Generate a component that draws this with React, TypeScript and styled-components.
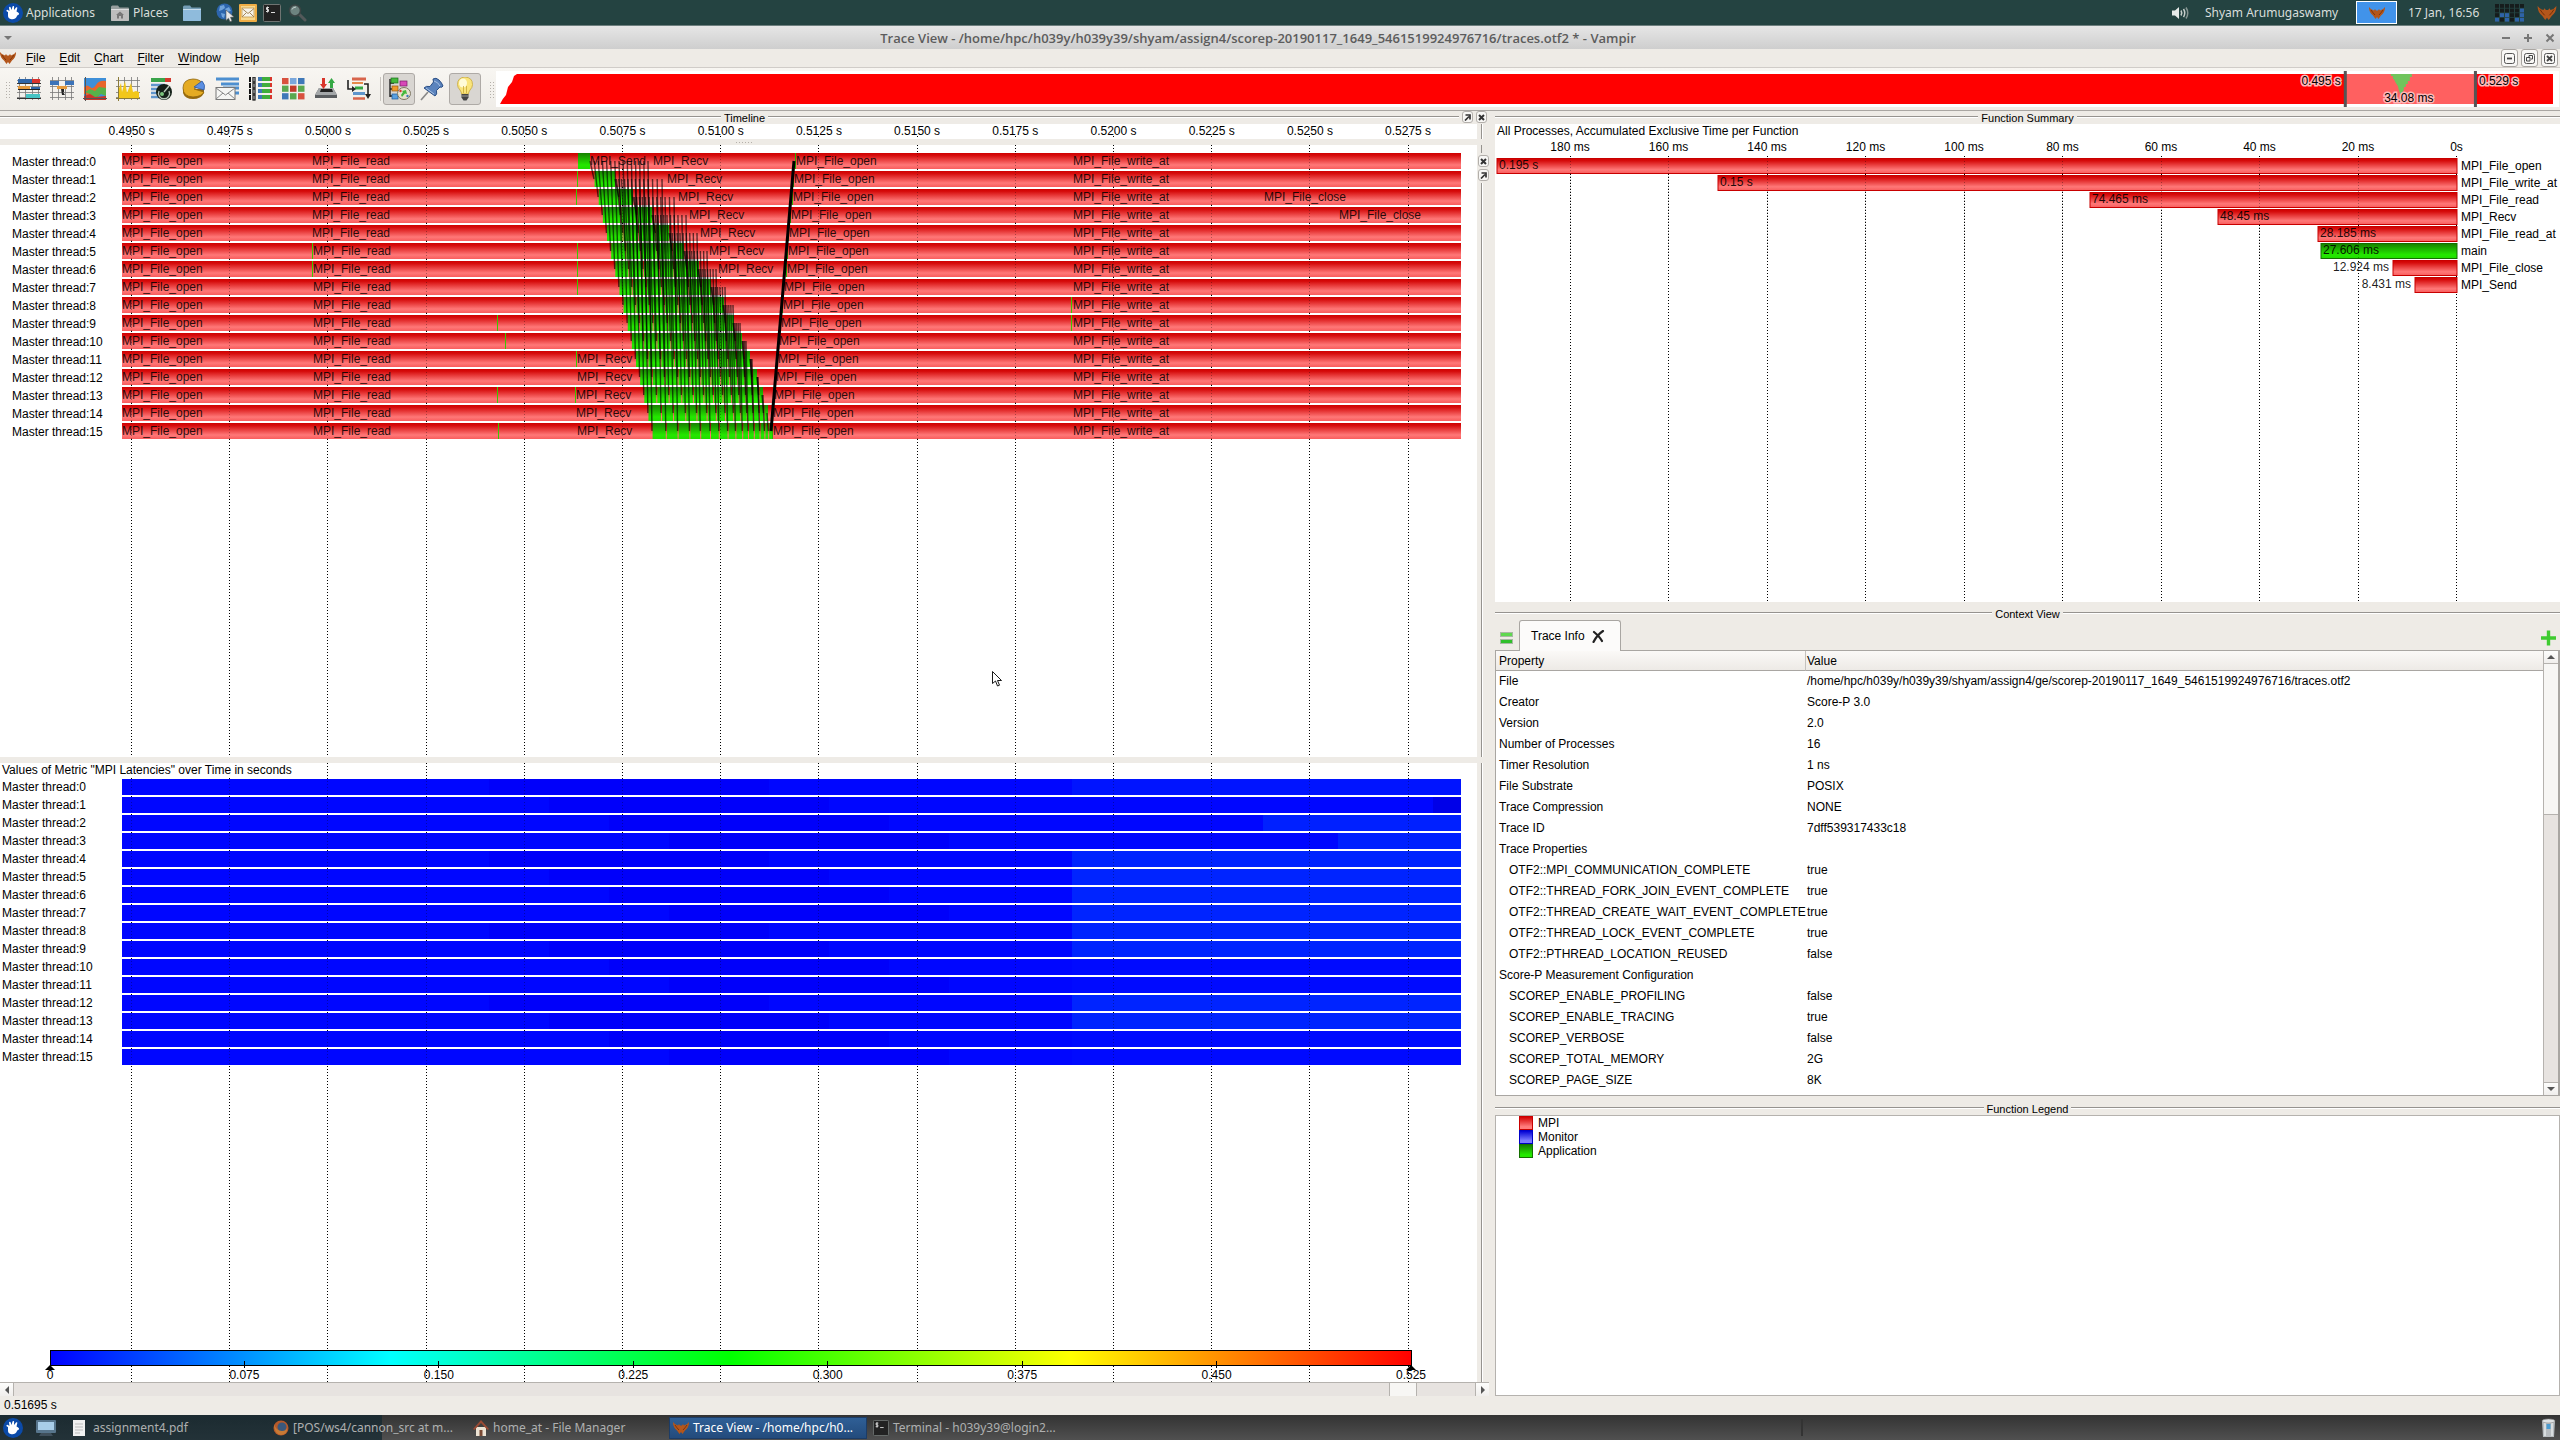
import React from "react";
import styled, { createGlobalStyle, css } from "styled-components";

const Global = createGlobalStyle`
  * { box-sizing: border-box; }
  body { margin: 0; background: #eeebe6; overflow: hidden; }
  body, button { font-family: "Liberation Sans", Arial, sans-serif; font-size: 12px; color: #000; }
  button { border: 0; padding: 0; background: none; cursor: default; }
  svg { display: block; }
`;

const desktopFont = css`
  font-family: "Noto Sans", "Open Sans", sans-serif;
`;

/* ---------- shell ---------- */

const Page = styled.div`
  height: 100vh;
  display: flex;
  flex-direction: column;
  background: #eeebe6;
`;

const TopPanel = styled.header`
  height: 26px;
  flex: none;
  display: flex;
  align-items: center;
  padding: 0 2px 0 3px;
  background: #244341;
  border-bottom: 1px solid #6d7f7e;
`;

const PanelButton = styled.button<{ $w: number }>`
  ${desktopFont}
  width: ${(p) => p.$w}px;
  height: 24px;
  flex: none;
  display: flex;
  align-items: center;
  gap: 3px;
  color: #d9dedb;
  white-space: nowrap;
`;

const Spacer = styled.div`
  flex: 1;
`;

const WorkspaceButton = styled.button`
  width: 41px;
  height: 23px;
  margin-right: 11px;
  display: grid;
  place-items: center;
  background: #4193ea;
  border: 1px solid #fff;
`;

const TitleBar = styled.div`
  height: 23px;
  flex: none;
  display: grid;
  grid-template-columns: 36px 1fr 80px;
  align-items: center;
  background: linear-gradient(#e6e6e6, #cecece);
`;

const WindowTitle = styled.h1`
  margin: 0;
  font-family: "Open Sans", "Noto Sans", sans-serif;
  font-size: 13px;
  line-height: 22px;
  font-weight: 600;
  color: #5c5c5c;
  text-align: center;
  white-space: nowrap;
`;

const TitleControls = styled.div<{ $end?: boolean }>`
  display: flex;
  gap: 10px;
  padding: 0 4px;
  justify-content: ${(p) => (p.$end ? "flex-end" : "flex-start")};
`;

const MenuBar = styled.nav`
  height: 19px;
  flex: none;
  display: flex;
  align-items: center;
  gap: 10px;
  padding: 0 2px 0 0;
  border-bottom: 1px solid #d0ccc8;
`;

const MenuItems = styled.div`
  display: flex;
  gap: 14px;
`;

const MenuItem = styled.button`
  line-height: 18px;
  & > u {
    text-underline-offset: 2px;
  }
`;

const MdiGroup = styled.div`
  display: flex;
  gap: 3px;
  margin-left: auto;
`;

const MdiButton = styled.button`
  width: 17px;
  height: 18px;
  display: grid;
  place-items: center;
  border: 1px solid #aaa6a2;
  border-radius: 3px;
  background: #f8f7f5;
`;

const Toolbar = styled.div`
  height: 43px;
  flex: none;
  display: flex;
  align-items: center;
  gap: 1px;
  padding: 0 1px 0 5px;
  background: linear-gradient(#f8f6f2, #efece7);
  border-bottom: 1px solid #a9a6a2;
`;

const Handle = styled.div<{ $before: number; $after: number }>`
  width: 5px;
  height: 17px;
  margin: 0 ${(p) => p.$after}px 0 ${(p) => p.$before}px;
  background-image: radial-gradient(#b4b0aa 1px, transparent 1px);
  background-size: 3px 3px;
`;

const ToolButton = styled.button<{ $on?: boolean }>`
  width: 32px;
  height: 32px;
  flex: none;
  display: grid;
  place-items: center;
  border-radius: 3px;
  ${(p) =>
    p.$on &&
    css`
      background: #d9d6d2;
      border: 1px solid #aeaaa6;
    `}
`;

const ToolSeparator = styled.div`
  width: 1px;
  height: 24px;
  margin: 0 1px 0 4px;
  background: #c9c5c0;
`;

const Overview = styled.div`
  flex: 1;
  height: 36px;
  background: #fff;
`;

const Workspace = styled.main`
  flex: 1;
  min-height: 0;
  display: grid;
  grid-template-columns: minmax(0, 1489fr) minmax(0, 1065fr);
  column-gap: 6px;
`;

const Column = styled.section`
  min-width: 0;
  min-height: 0;
  display: flex;
  flex-direction: column;
`;

const StatusBar = styled.footer`
  height: 19px;
  flex: none;
  padding-left: 4px;
  line-height: 19px;
`;

/* ---------- dock heading ---------- */

const HeadingRow = styled.div<{ $top?: number }>`
  flex: none;
  display: grid;
  grid-template-columns: 1fr auto 1fr;
  column-gap: 3px;
  padding-top: ${(p) => p.$top ?? 0}px;
`;

const HeadingText = styled.h2`
  margin: 0;
  padding-top: 2px;
  font-size: 11px;
  font-weight: 400;
  line-height: 11px;
`;

const HeadingSide = styled.div`
  display: flex;
  height: 13px;
  gap: 3px;
`;

const HeadingButtons = styled.div`
  display: flex;
  gap: 3px;
  padding-right: 2px;
`;

const Rule = styled.div`
  flex: 1;
  height: 2px;
  margin-top: 5px;
  background: #fff;
  border-top: 1px solid #96938f;
`;

const MiniButton = styled.button`
  width: 11px;
  height: 12px;
  display: grid;
  place-items: center;
  border: 1px solid #b3afab;
  border-radius: 3px;
  background: #f8f7f5;
`;

function Heading({ title, top, children }: { title: string; top?: number; children?: React.ReactNode }) {
  return (
    <HeadingRow $top={top}>
      <HeadingSide>
        <Rule />
      </HeadingSide>
      <HeadingText>{title}</HeadingText>
      <HeadingSide>
        <Rule />
        {children}
      </HeadingSide>
    </HeadingRow>
  );
}

/* ---------- timeline panes ---------- */

const Pane = styled.div<{ $grow?: number; $height?: number }>`
  flex: ${(p) => (p.$grow ? `${p.$grow} 1 0` : "none")};
  height: ${(p) => (p.$height ? `${p.$height}px` : "auto")};
  min-height: 0;
  display: grid;
  grid-template-columns: minmax(0, 1fr) 12px;
`;

const Canvas = styled.div`
  min-height: 0;
  display: grid;
  grid-template-columns: 122px minmax(0, 1fr) 16px;
  grid-template-rows: minmax(0, 1fr);
  background: #fff;
`;

const PlotLayer = styled.svg`
  grid-column: 2;
  grid-row: 1;
  width: 100%;
  height: 100%;
  overflow: visible;
`;

const LabelList = styled.ul<{ $left: number; $top: number }>`
  grid-column: 1;
  grid-row: 1;
  margin: 0;
  padding: ${(p) => p.$top}px 0 0 ${(p) => p.$left}px;
  list-style: none;
  line-height: 18px;
  white-space: nowrap;
`;

const SideStrip = styled.div`
  display: flex;
  flex-direction: column;
  gap: 2px;
`;

const SideLine = styled.div`
  flex: 1;
  width: 2px;
  margin-left: 4px;
  background: #fff;
  border-left: 1px solid #96938f;
`;

const SideButtons = styled.div`
  display: flex;
  flex-direction: column;
  gap: 2px;
  padding-left: 1px;
`;

const SideStub = styled.div`
  height: 8px;
  width: 2px;
  margin-left: 4px;
  border-left: 1px solid #96938f;
`;

const Splitter = styled.div`
  flex: none;
  height: 6px;
  display: grid;
  place-items: center;
`;

const SplitterDots = styled.div`
  width: 17px;
  height: 1px;
  background: repeating-linear-gradient(90deg, #b4b0aa 0 1px, transparent 1px 3px);
`;

const MetricContent = styled.div`
  grid-column: 1 / -1;
  grid-row: 1;
  z-index: 1;
  display: flex;
  flex-direction: column;
`;

const MetricTitle = styled.h3`
  margin: 0;
  align-self: flex-start;
  height: 15px;
  padding: 0 2px;
  font-size: 12px;
  font-weight: 400;
  line-height: 15px;
  background: #fff;
`;

const MetricRows = styled.div`
  flex: 1;
  display: grid;
  grid-template-columns: 122px minmax(0, 1fr) 16px;
`;

const ScaleBlock = styled.div`
  padding: 0 66px 0 50px;
  height: 33px;
`;

const ScaleSvg = styled.svg`
  width: 100%;
  height: 33px;
  overflow: visible;
`;

const HScroll = styled.div`
  flex: none;
  height: 14px;
  display: flex;
  border-top: 1px solid #b5b2ae;
  background: #e7e3e0;
`;

const ScrollButton = styled.button<{ $line: string }>`
  width: 14px;
  height: 13px;
  flex: none;
  display: grid;
  place-items: center;
  background: linear-gradient(#fdfdfc, #f0eeec);
  border-${(p) => p.$line}: 1px solid #b5b2ae;
`;

const Trough = styled.div<{ $grow: number }>`
  flex: ${(p) => p.$grow} 1 0;
`;

const Thumb = styled.div<{ $vertical?: boolean; $grow: number }>`
  flex: ${(p) => p.$grow} 1 0;
  background: #f7f6f4;
  border: 0 solid #b5b2ae;
  border-width: ${(p) => (p.$vertical ? "0 0 1px" : "0 1px")};
`;

/* ---------- right column ---------- */

const SummaryPane = styled.div`
  flex: 478 1 0;
  min-height: 0;
  display: grid;
  grid-template-columns: 2px minmax(0, 1fr) 103px;
  grid-template-rows: 34px minmax(0, 1fr);
  background: #fff;
  overflow: hidden;
`;

const SummaryTitle = styled.h3`
  grid-column: 2 / -1;
  margin: 0;
  font-size: 12px;
  font-weight: 400;
  line-height: 14px;
`;

const SummaryPlot = styled.svg`
  grid-column: 2;
  grid-row: 2;
  width: 100%;
  height: 100%;
  overflow: visible;
`;

const SummaryNames = styled.ul`
  grid-column: 3;
  grid-row: 2;
  margin: 0;
  padding: 0 0 0 4px;
  list-style: none;
  line-height: 17px;
  white-space: nowrap;
`;

const TabBar = styled.div`
  flex: none;
  height: 30px;
  display: flex;
  align-items: flex-end;
  padding: 0 4px 0 5px;
`;

const TabAction = styled.button<{ $end?: boolean }>`
  width: 15px;
  height: 24px;
  margin-left: ${(p) => (p.$end ? "auto" : "0")};
`;

const Tab = styled.div`
  height: 31px;
  width: 102px;
  margin: 0 0 -1px 4px;
  padding: 0 15px 0 11px;
  display: flex;
  align-items: center;
  justify-content: space-between;
  z-index: 1;
  background: #fcfbfa;
  border: 1px solid #a9a6a2;
  border-bottom: 0;
  border-radius: 3px 3px 0 0;
`;

const TreeBox = styled.div`
  flex: 444 1 0;
  min-height: 0;
  display: grid;
  grid-template-columns: minmax(0, 1fr) 15px;
  border: 1px solid #a9a6a2;
  border-right-width: 2px;
  background: #fff;
  overflow: hidden;
`;

const TreeView = styled.div`
  min-height: 0;
  overflow: hidden;
`;

const Table = styled.table`
  width: 100%;
  border-spacing: 0;
  table-layout: fixed;
`;

const HeadCell = styled.th<{ $w?: number }>`
  width: ${(p) => (p.$w ? `${p.$w}px` : "auto")};
  height: 20px;
  padding: 1px 0 0 ${(p) => (p.$w ? 3 : 1)}px;
  text-align: left;
  font-weight: 400;
  line-height: 17px;
  background: linear-gradient(#fbf9f7, #edeae6);
  border-bottom: 1px solid #a9a6a2;
  border-left: ${(p) => (p.$w ? "0" : "1px solid #c4c1bd")};
`;

const Cell = styled.td<{ $pad: number }>`
  height: 21px;
  padding: 0 0 0 ${(p) => p.$pad}px;
  line-height: 21px;
  white-space: nowrap;
`;

const VScroll = styled.div`
  display: flex;
  flex-direction: column;
  background: #e7e3e0;
  border-left: 1px solid #b5b2ae;
`;

const LegendBox = styled.ul`
  flex: 279 1 0;
  min-height: 0;
  margin: 0;
  padding: 0 0 0 23px;
  list-style: none;
  background: #fff;
  border: 1px solid #b5b2ae;
`;

const LegendItem = styled.li`
  height: 14px;
  display: flex;
  align-items: center;
  gap: 5px;
  line-height: 14px;
`;

const Swatch = styled.span<{ $top: string; $bottom: string; $edge: string }>`
  width: 14px;
  height: 14px;
  border: 1px solid ${(p) => p.$edge};
  background: linear-gradient(${(p) => p.$top}, ${(p) => p.$bottom} 80%);
`;

/* ---------- task bar ---------- */

const TaskBar = styled.footer`
  height: 25px;
  flex: none;
  display: flex;
  align-items: center;
  padding: 0 4px 0 3px;
  background: linear-gradient(90deg, rgba(20, 40, 48, 0.75) 0 382px, transparent 382px),
    linear-gradient(#333, #505050);
`;

const Tasks = styled.div`
  flex: 1;
  display: flex;
  gap: 2px;
`;

const TaskButton = styled.button<{ $active?: boolean }>`
  ${desktopFont}
  width: 198px;
  height: 22px;
  padding: 0 4px 0 3px;
  display: flex;
  align-items: center;
  gap: 4px;
  text-align: left;
  white-space: nowrap;
  color: ${(p) => (p.$active ? "#fff" : "#aeb0b0")};
  background: ${(p) => (p.$active ? "linear-gradient(#2f5f96, #234b7c)" : "none")};
  border: 1px solid ${(p) => (p.$active ? "#1c3c66" : "transparent")};
`;

const DesktopButton = styled.button`
  width: 33px;
  height: 24px;
  flex: none;
  display: grid;
  place-items: center start;
`;

const TaskSeparator = styled.div`
  width: 2px;
  height: 17px;
  margin-right: 738px;
  background: #333;
`;

const Pointer = styled.svg`
  position: absolute;
  left: 992px;
  top: 671px;
  z-index: 5;
`;

/* ---------- icons ---------- */

const XubuntuIcon = () => (
  <svg width="20" height="20" viewBox="0 0 20 20">
    <circle cx="10" cy="10" r="10" fill="#0b4aa8" />
    <path d="M5 9c-2-.5-2-2-.5-2.200L6.500 8 6 4.500c.5-1 1.500-.8 1.800.2L8.500 7 9.500 3.500c.7-1 1.700-.5 1.600.5L11 7l2-2.500c1-.5 1.600.2 1.200 1L13.500 8.500c2 1 3 2 2.500 3-1 .5-1.500.5-2 1.500-1 2.500-3 3.500-5.500 3.200C6 16 5 14.500 5 12.500z" fill="#fff" />
  </svg>
);

const FolderIcon = ({ color, home }: { color: string; home?: boolean }) => (
  <svg width="20" height="18" viewBox="0 0 20 18">
    <path d="M1 3q0-1.500 1.500-1.500H8l1.500 2H18q1 0 1 1V16q0 1-1 1H2q-1 0-1-1z" fill={color} opacity=".75" />
    <rect x="1" y="5" width="18" height="12" rx="1" fill={color} />
    <path d="M1 5.500h18" stroke="#fff" opacity=".5" />
    {home && <path d="M6 11l4-3.500 4 3.500h-1v3.500h-2V12H9v2.500H7V11z" fill="#777" />}
  </svg>
);

const GlobeIcon = () => (
  <svg width="19" height="19" viewBox="0 0 19 19">
    <circle cx="8.500" cy="8.500" r="8" fill="#2c65ad" />
    <path d="M4 3l4-1 1 3-3 2-3 1zM9 6l4-2 2 4-4 1zM5 10l4 1-1 4-2-1z" fill="#6fa3dc" />
    <path d="M10 7l8 7-3.500.300L16 18l-2 .7-1.500-3.500L10 17.500z" fill="#e8e8e8" stroke="#555" strokeWidth=".6" />
  </svg>
);

const MailIcon = () => (
  <svg width="18" height="18" viewBox="0 0 18 18">
    <rect width="18" height="18" rx="1" fill="#efad45" />
    <rect x="2" y="2" width="14" height="14" fill="#f7d78d" />
    <rect x="3" y="4" width="12" height="9" fill="#f6f3ea" stroke="#c49a52" strokeWidth=".8" />
    <path d="M3 4.500l6 5 6-5M3 13l4.500-4.500M15 13l-4.500-4.500" fill="none" stroke="#a5875a" />
  </svg>
);

const TerminalIcon = ({ size = 18 }: { size?: number }) => (
  <svg width={size} height={size} viewBox="0 0 18 18">
    <rect x=".5" y=".5" width="17" height="17" rx="1" fill="#222" stroke="#6f7472" />
    <path d="M6 3.500H3.500V5.500H5.500V7.500H3M4.500 2.500v6M8 8.500h4" fill="none" stroke="#ddd" />
  </svg>
);

const SearchIcon = () => (
  <svg width="19" height="18" viewBox="0 0 19 18">
    <path d="M10 9l7 7" stroke="#53595a" strokeWidth="3" strokeLinecap="round" />
    <circle cx="7" cy="6.500" r="5.500" fill="#6d8380" stroke="#3a4444" strokeWidth="1.600" />
    <path d="M4 5.500q1-2.500 4-2.500" stroke="#c9d4d2" fill="none" />
  </svg>
);

const VolumeIcon = () => (
  <svg width="18" height="16" viewBox="0 0 18 16">
    <path d="M0 5.500h3L7 2v12L3 10.500H0z" fill="#e6eae8" />
    <path d="M9 5.500q1.500 2.500 0 5M11.500 4q2.500 4 0 8" stroke="#c8cfcc" strokeWidth="1.500" fill="none" />
    <path d="M14 2.500q3.500 5.500 0 11" stroke="#879592" strokeWidth="1.500" fill="none" />
  </svg>
);

const VampirIcon = ({ w = 16, h = 12 }: { w?: number; h?: number }) => (
  <svg width={w} height={h} viewBox="0 0 16 12">
    <path d="M0 0q2 3 5 3.500.5-1 1-1.500L7 3.500h2L10 2q.5.5 1 1.500Q14 3 16 0q.3 5-4 8.500L9.500 12 8 10l-1.500 2L4 8.500Q-.3 5 0 0z" fill="#b4561b" />
    <path d="M2 3q2 3 4 5M14 3q-2 3-4 5" stroke="#6d2b06" strokeWidth=".8" fill="none" />
  </svg>
);

const CpuGrid = () => (
  <svg width="30" height="18" viewBox="0 0 30 18">
    {[0, 1, 2, 3].map((r) =>
      [0, 1, 2, 3, 4, 5].map((c) => (
        <rect key={`${r}-${c}`} x={c * 5} y={r * 4.6} width="4" height="3.800" fill={"000000000001011001101011".charAt(r * 6 + c) === "1" ? "#2e63a8" : "#161c1c"} />
      )),
    )}
  </svg>
);

const Grid24 = () => <path d="M2.500 0v23M8.500 0v23M15.500 0v23M21.500 0v23M0 3.500h24M0 9.500h24M0 15.500h24M0 20.500h24" stroke="#777" strokeWidth=".8" fill="none" />;

const toolIcons: { name: string; art: React.ReactNode }[] = [
  {
    name: "Master timeline",
    art: (
      <>
        <Grid24 />
        <rect x="1" y="2" width="14" height="4" fill="#2f66a8" />
        <rect x="15" y="2" width="8" height="4" fill="#d9322c" />
        <rect x="1" y="9" width="12" height="4" fill="#e59a3c" />
        <rect x="14" y="10" width="9" height="3" fill="#2f66a8" />
        <rect x="1" y="12" width="22" height="1" fill="#222" />
        <rect x="9" y="17" width="14" height="4" fill="#46c3c4" />
        <path d="M0 6.500h24M0 21.500h24" stroke="#333" />
      </>
    ),
  },
  {
    name: "Process timeline",
    art: (
      <>
        <Grid24 />
        <rect x="0" y="4" width="9" height="4" fill="#3b73b8" />
        <rect x="15" y="4" width="9" height="4" fill="#3b73b8" />
        <rect x="7" y="9" width="10" height="3" fill="#e59a3c" />
        <path d="M11 12h3v3h-1l2 3h-3z" fill="#222" />
      </>
    ),
  },
  {
    name: "Summary timeline",
    art: (
      <>
        <rect x="1" y="1" width="22" height="21" fill="#3e8fd8" />
        <path d="M1 10q3-3 6 0t6-2 10-4v10l-8 3-6 3-8-3z" fill="#e8662c" />
        <path d="M2 15l5-3 5 2 4-4 7 1v8l-5-2-5 4-6-4z" fill="#57b24a" />
        <path d="M1 19l6-2 5 3 11-1v4H1z" fill="#c9362a" />
        <path d="M2.500 0v24M0 21.500h24" stroke="#555" />
      </>
    ),
  },
  {
    name: "Counter timeline",
    art: (
      <>
        <Grid24 />
        <path d="M2 21V14l3-8 1 9 3-11 2 12 4-10 2 9 3-1 3 1v6z" fill="#f2c71b" />
        <path d="M2.500 0v24M0 21.500h24" stroke="#8a7a3a" />
      </>
    ),
  },
  {
    name: "Performance radar",
    art: (
      <>
        <rect x="2" y="1" width="20" height="4" fill="#3aa44a" />
        <rect x="16" y="1" width="6" height="4" fill="#d33a2e" />
        <path d="M2 8h14M2 12h10M2 16h9M2 20h9" stroke="#5f95cc" strokeWidth="2.500" />
        <circle cx="15" cy="15" r="8" fill="#142018" />
        <path d="M15 15l5-6M10 14a5.500 5.500 0 1 0 10 0" stroke="#b8c8bb" strokeWidth="1.400" fill="none" />
        <circle cx="13" cy="17" r="2" fill="#7ac47e" />
      </>
    ),
  },
  {
    name: "Function summary",
    art: (
      <>
        <path d="M1 12v4q2 6 10 6t11-6v-4z" fill="#96690d" />
        <path d="M12 12l9-5q-3-5-10-5Q1 2.500 1 11t10 9q9-.5 11-5z" fill="#e5ab22" stroke="#8d640f" strokeWidth=".8" />
        <path d="M12 10l8-6q4 4 2 9z" fill="#5b8fe2" stroke="#2c58a0" strokeWidth=".8" />
      </>
    ),
  },
  {
    name: "Message summary",
    art: (
      <>
        <path d="M1 2h23M6 7h18M8 11h16M12 16h12" stroke="#4d8fd0" strokeWidth="3.200" />
        <rect x="1" y="10.500" width="19" height="12" fill="#f6f6f4" stroke="#777" />
        <path d="M1 11l9.500 7 9.500-7M1 22l7-6M20 22l-7-6" fill="none" stroke="#888" />
      </>
    ),
  },
  {
    name: "Process summary",
    art: (
      <>
        {[0, 6, 12, 18].map((y) => (
          <g key={y}>
            <rect x="1" y={y} width="2" height="5" fill="#111" />
            <rect x="5" y={y} width="2" height="5" fill="#fff" stroke="#111" strokeWidth="1.200" />
            <rect x="10" y={y} width="6" height="4" fill="#3f78b8" />
            <rect x="14" y={y} width="8" height="4" fill="#3fae3c" />
            <rect x="22" y={y} width="2" height="4" fill="#d8352b" />
          </g>
        ))}
      </>
    ),
  },
  {
    name: "Communication matrix",
    art: (
      <>
        {["#d8513e", "#7aa7dc", "#3f78b8", "#5aa84f", "#c23a2b", "#5aa84f", "#3f78b8", "#5aa84f", "#d8513e"].map((c, i) => (
          <rect key={i} x={1 + (i % 3) * 8} y={1 + Math.floor(i / 3) * 7.6} width="6.500" height="6.200" fill={c} />
        ))}
      </>
    ),
  },
  {
    name: "I/O summary",
    art: (
      <>
        <path d="M5 11h14l4 7v3H1v-3z" fill="#5a5d60" />
        <path d="M5 11h14l4 7H1z" fill="#a4a7a9" />
        <path d="M7 12h11l1 3H6z" fill="#222" />
        <path d="M8 1h3v6h2l-3.500 5L6 7h2z" fill="#d8352b" />
        <path d="M16 11V6h-2l3.500-5L21 6h-2v5z" fill="#35a844" />
      </>
    ),
  },
  {
    name: "Call tree",
    art: (
      <>
        <path d="M5 2h14" stroke="#d8654c" strokeWidth="3" />
        <path d="M5 6h11" stroke="#e58a4c" strokeWidth="2" />
        <path d="M8 11h8" stroke="#35a844" strokeWidth="3" />
        <path d="M6 16.500h12" stroke="#5f95cc" strokeWidth="3" />
        <path d="M6 21.500h12" stroke="#d8654c" strokeWidth="2.500" />
        <path d="M1 3v9h6M17 7h4v13" stroke="#222" strokeWidth="1.600" fill="none" />
        <path d="M5 9l4 3-4 3zM18 17h6l-3 5z" fill="#222" />
      </>
    ),
  },
];

const ColorIcon = () => (
  <svg width="24" height="24" viewBox="0 0 24 24">
    <path d="M3 2v18M3 6h4M3 12h4M3 19h4" stroke="#222" strokeWidth="1.400" fill="none" />
    <rect x="4" y="1" width="7" height="5" fill="#44b83c" stroke="#1c6d1c" strokeWidth=".7" />
    <rect x="13" y="4" width="7" height="5" fill="#d848b8" stroke="#7a1c66" strokeWidth=".7" />
    <rect x="5" y="9" width="6" height="5" fill="#f09a2c" stroke="#9a5a0c" strokeWidth=".7" />
    <rect x="5" y="17" width="6" height="5" fill="#5aa0e0" stroke="#1c5a9a" strokeWidth=".7" />
    <ellipse cx="17" cy="16.500" rx="6.500" ry="6" fill="#e8e2cf" stroke="#7d7763" />
    <path d="M15 20l-1-2 2-3-1-1 4-1 1 4-2-.5z" fill="#44b83c" />
    <circle cx="13.500" cy="14" r="1.200" fill="#d8352b" />
    <circle cx="20.500" cy="19" r="1.200" fill="#3f78b8" />
  </svg>
);

const PinIcon = () => (
  <svg width="24" height="24" viewBox="0 0 24 24">
    <path d="M8 15l-7 8" stroke="#888" strokeWidth="1.600" />
    <path d="M13 2q3-2 6 1t4 6q-1 2-3 1l-3.500 3.500q1 4-1.500 5.500L4 11q2-2.500 6-1.500L13.500 5z" fill="#5a83bd" stroke="#2b4f86" />
    <path d="M14 4q4 1 6 5M6 11l8 6" stroke="#a9c2e4" fill="none" />
  </svg>
);

const BulbIcon = () => (
  <svg width="24" height="24" viewBox="0 0 24 24">
    <path d="M12 0q7.500.5 7.500 7.500 0 3-2.500 5.500-1.500 2-1.500 4h-7q0-2-1.500-4Q4.500 10.500 4.500 7.500 4.500.5 12 0z" fill="#fae57c" stroke="#c9a93a" strokeWidth=".8" />
    <ellipse cx="10" cy="6" rx="4" ry="4.500" fill="#fffbd8" />
    <path d="M10.500 9v7M13.500 9v7" stroke="#c9a93a" strokeWidth=".8" />
    <path d="M8.500 17h7v3.500l-2 3h-3l-2-3z" fill="#444" />
    <path d="M8.500 19h7" stroke="#999" />
  </svg>
);

const CrossGlyph = ({ size = 7 }: { size?: number }) => (
  <svg width={size} height={size} viewBox="0 0 7 7">
    <path d="M1 1l5 5M6 1l-5 5" stroke="#333" strokeWidth="2" />
  </svg>
);

const DetachGlyph = () => (
  <svg width="7" height="7" viewBox="0 0 7 7">
    <path d="M1 6.500l4-4M1.500 1h4.500v4.500" stroke="#333" strokeWidth="1.700" fill="none" />
  </svg>
);

const Arrow = ({ dir, color = "#555" }: { dir: "up" | "down" | "left" | "right"; color?: string }) => (
  <svg width="8" height="8" viewBox="0 0 8 8">
    <path d={{ up: "M0 6h8L4 2z", down: "M0 2h8L4 6z", left: "M6 0v8L2 4z", right: "M2 0v8l4-4z" }[dir]} fill={color} />
  </svg>
);

/* ---------- data ---------- */

const PLOT_LEFT = 122;
const PLOT_WIDTH = 1339;
const px = (x: number) => `${((x - PLOT_LEFT) / PLOT_WIDTH) * 100}%`;
const wide = (w: number) => `${(w / PLOT_WIDTH) * 100}%`;

const threads = Array.from({ length: 16 }, (_, i) => `Master thread:${i}`);
const ticks = ["0.4950 s", "0.4975 s", "0.5000 s", "0.5025 s", "0.5050 s", "0.5075 s", "0.5100 s", "0.5125 s", "0.5150 s", "0.5175 s", "0.5200 s", "0.5225 s", "0.5250 s", "0.5275 s"].map(
  (label, i) => ({ label, x: 131.5 + i * 98.2 }),
);

const firstSend = [590, 615, 633, 652, 669, 684, 698, 711, 723, 733, 742, 750, 757, 762, 767];
const lastSend = [648, 662, 674, 686, 697, 707, 716, 725, 733, 740, 746, 752, 758, 763, 767];
const greenEnd = [590, 615, 633, 652, 669, 684, 699, 711, 724, 734, 742, 750, 757, 763, 768, 772];
const openAt = [796, 794, 793, 791, 789, 788, 787, 784, 783, 781, 779, 778, 776, 774, 773, 773];

type Message = { from: number; to: number; x1: number; x2: number };
const messages: Message[] = [];
for (let s = 0; s < 15; s += 1) {
  for (let d = s + 1; d < 16; d += 1) {
    const t = s === 14 ? 0 : (d - s - 1) / (14 - s);
    const x1 = firstSend[s] + (lastSend[s] - firstSend[s]) * Math.pow(t, s === 0 ? 1 : 1.35);
    messages.push({ from: s, to: d, x1, x2: x1 + 4 - s * 0.2 });
  }
}

const rowLabels: [number, number, string][] = [
  ...openAt.map((x, i): [number, number, string] => [i, x, "MPI_File_open"]),
  ...threads.map((_, i): [number, number, string] => [i, 122, "MPI_File_open"]),
  ...threads.map((_, i): [number, number, string] => [i, i < 5 ? 312 : 313, "MPI_File_read"]),
  ...threads.map((_, i): [number, number, string] => [i, 1073, "MPI_File_write_at"]),
  [0, 590, "MPI_Send"],
  ...[653, 667, 678, 689, 700, 709, 718].map((x, i): [number, number, string] => [i, x, "MPI_Recv"]),
  ...[577, 577, 576, 576, 577].map((x, i): [number, number, string] => [i + 11, x, "MPI_Recv"]),
  [2, 1264, "MPI_File_close"],
  [3, 1339, "MPI_File_close"],
];

const slivers: [number, number][] = [
  [1, 577], [2, 576], [5, 577], [6, 577], [7, 577], [11, 576], [13, 575],
  [5, 312], [6, 312], [9, 497], [10, 505], [13, 497], [15, 498], [8, 1071], [9, 1071],
];

const latency: { from: number; color: string }[][] = threads.map((_, i) => {
  if (i === 1) return [{ from: 1433, color: "#0000e8" }];
  if (i === 2) return [{ from: 1263, color: "#0020ff" }];
  if (i === 3) return [{ from: 1338, color: "#0020ff" }];
  if ([0, 10, 11, 14, 15].includes(i)) return [{ from: 1072, color: i === 0 ? "#0014ff" : "#000aff" }];
  return [{ from: 1072, color: "#0024ff" }];
});

const scaleLabels = ["0", "0.075", "0.150", "0.225", "0.300", "0.375", "0.450", "0.525"];

const summary = [
  { name: "MPI_File_open", value: "0.195 s", x: 1497 },
  { name: "MPI_File_write_at", value: "0.15 s", x: 1718 },
  { name: "MPI_File_read", value: "74.465 ms", x: 2090 },
  { name: "MPI_Recv", value: "48.45 ms", x: 2218 },
  { name: "MPI_File_read_at", value: "28.185 ms", x: 2318 },
  { name: "main", value: "27.606 ms", x: 2321, green: true },
  { name: "MPI_File_close", value: "12.924 ms", x: 2393, outside: true },
  { name: "MPI_Send", value: "8.431 ms", x: 2415, outside: true },
];
const sx = (x: number) => `${((x - 1497) / 960) * 100}%`;
const summaryTicks = ["180 ms", "160 ms", "140 ms", "120 ms", "100 ms", "80 ms", "60 ms", "40 ms", "20 ms", "0s"].map((label, i) => ({
  label,
  x: 1570 + i * 98.5,
}));

const properties: [string, string, boolean?][] = [
  ["File", "/home/hpc/h039y/h039y39/shyam/assign4/ge/scorep-20190117_1649_5461519924976716/traces.otf2"],
  ["Creator", "Score-P 3.0"],
  ["Version", "2.0"],
  ["Number of Processes", "16"],
  ["Timer Resolution", "1 ns"],
  ["File Substrate", "POSIX"],
  ["Trace Compression", "NONE"],
  ["Trace ID", "7dff539317433c18"],
  ["Trace Properties", ""],
  ["OTF2::MPI_COMMUNICATION_COMPLETE", "true", true],
  ["OTF2::THREAD_FORK_JOIN_EVENT_COMPLETE", "true", true],
  ["OTF2::THREAD_CREATE_WAIT_EVENT_COMPLETE", "true", true],
  ["OTF2::THREAD_LOCK_EVENT_COMPLETE", "true", true],
  ["OTF2::PTHREAD_LOCATION_REUSED", "false", true],
  ["Score-P Measurement Configuration", ""],
  ["SCOREP_ENABLE_PROFILING", "false", true],
  ["SCOREP_ENABLE_TRACING", "true", true],
  ["SCOREP_VERBOSE", "false", true],
  ["SCOREP_TOTAL_MEMORY", "2G", true],
  ["SCOREP_PAGE_SIZE", "8K", true],
];

/* ---------- charts ---------- */

function Gradients() {
  return (
    <defs>
      <linearGradient id="mpi" x1="0" y1="0" x2="0" y2="1">
        <stop offset="0" stopColor="#cf0000" />
        <stop offset=".15" stopColor="#d60c0c" />
        <stop offset=".75" stopColor="#ff7878" />
        <stop offset="1" stopColor="#f85c5c" />
      </linearGradient>
      <linearGradient id="app" x1="0" y1="0" x2="0" y2="1">
        <stop offset="0" stopColor="#178000" />
        <stop offset=".75" stopColor="#24e800" />
        <stop offset="1" stopColor="#20dc00" />
      </linearGradient>
    </defs>
  );
}

function GridLines({ opacity = 1, tall = "100%", top = 0 }: { opacity?: number; tall?: string | number; top?: number }) {
  return (
    <g stroke="#000" strokeDasharray="1 2" opacity={opacity} shapeRendering="crispEdges">
      {ticks.map((t) => (
        <line key={t.label} x1={px(t.x)} x2={px(t.x)} y1={top} y2={tall} />
      ))}
    </g>
  );
}

function ProcessTimeline() {
  return (
    <PlotLayer>
      <Gradients />
      <GridLines />
      {threads.map((name, r) => (
        <rect key={name} x="0" width="100%" y={8 + r * 18} height="16" fill="url(#mpi)" />
      ))}
      <rect x={px(578)} width={wide(12)} y="8" height="16" fill="url(#app)" />
      {slivers.map(([r, x]) => (
        <rect key={`${r}-${x}`} x={px(x)} width={wide(1)} y={8 + r * 18} height="16" fill="#3cc800" />
      ))}
      {threads.slice(1).map((name, i) => {
        const row = i + 1;
        const begin = messages[row - 1].x2 + 0.6;
        return <rect key={name} x={px(begin)} width={wide(greenEnd[row] - begin)} y={8 + row * 18} height="16" fill="url(#app)" />;
      })}
      {openAt.map((x, r) => (
        <rect key={x * 100 + r} x={px(x - 1)} width={wide(1)} y={8 + r * 18} height="16" fill="#2bb000" />
      ))}
      {messages
        .filter((m) => m.from > 0)
        .map((m) => (
          <rect key={`${m.from}-${m.to}`} x={px(m.x2)} width={wide(1)} y={8 + m.to * 18} height="16" fill="url(#mpi)" />
        ))}
      <g stroke="#000" strokeOpacity=".62" strokeWidth="1.400">
        {messages.map((m) => (
          <line key={`${m.from}-${m.to}`} x1={px(m.x1)} y1={16 + m.from * 18} x2={px(m.x2)} y2={16 + m.to * 18} />
        ))}
      </g>
      <line x1={px(794)} y1="16" x2={px(771)} y2="286" stroke="#000" strokeWidth="3" />
      <GridLines opacity={0.3} top={8} tall={294} />
      <g fontSize="12" fill="#000" fillOpacity=".85">
        {rowLabels.map(([r, x, text]) => (
          <text key={`${r}-${x}`} x={px(x)} y={20 + r * 18}>
            {text}
          </text>
        ))}
      </g>
    </PlotLayer>
  );
}

function MetricBars() {
  return (
    <PlotLayer>
      {threads.map((name, r) => (
        <g key={name}>
          <rect x="0" width="100%" y={1 + r * 18} height="16" fill="#0006ff" />
          <rect x={px(489 + (r % 4) * 60)} width={wide(280)} y={1 + r * 18} height="16" fill="#0000fa" />
          {latency[r].map((s) => (
            <rect key={s.from} x={px(s.from)} width={wide(1461 - s.from)} y={1 + r * 18} height="16" fill={s.color} />
          ))}
        </g>
      ))}
      <GridLines opacity={0.3} tall={288} />
    </PlotLayer>
  );
}

function ColorScale() {
  return (
    <ScaleSvg>
      <defs>
        <linearGradient id="rainbow">
          <stop offset="0" stopColor="#00f" />
          <stop offset=".25" stopColor="#0ff" />
          <stop offset=".5" stopColor="#0f0" />
          <stop offset=".75" stopColor="#ff0" />
          <stop offset="1" stopColor="#f00" />
        </linearGradient>
      </defs>
      <rect x="0" y="1" width="100%" height="15" fill="url(#rainbow)" stroke="#000" shapeRendering="crispEdges" />
      {scaleLabels.map((label, i) => (
        <g key={label}>
          <line x1={`${(i * 100) / 7}%`} x2={`${(i * 100) / 7}%`} y1="12" y2="19" stroke="#000" shapeRendering="crispEdges" />
          <text x={`${(i * 100) / 7}%`} y="30" fontSize="12" textAnchor="middle">
            {label}
          </text>
        </g>
      ))}
      <svg x="0" y="16" overflow="visible">
        <path d="M-5 5L0 0l5 5z" />
      </svg>
      <svg x="100%" y="16" overflow="visible">
        <path d="M-5 5L0 0l5 5z" />
      </svg>
    </ScaleSvg>
  );
}

function SummaryChart() {
  return (
    <SummaryPlot>
      <g stroke="#000" strokeDasharray="1 2" shapeRendering="crispEdges">
        {summaryTicks.map((t) => (
          <line key={t.label} x1={sx(t.x)} x2={sx(t.x)} y1="-2" y2="100%" />
        ))}
      </g>
      {summaryTicks.map((t) => (
        <text key={t.label} x={sx(t.x)} y="-7" fontSize="12" textAnchor="middle">
          {t.label}
        </text>
      ))}
      {summary.map((b, i) => (
        <rect
          key={b.name}
          x={sx(b.x)}
          width={`${((2457 - b.x) / 960) * 100}%`}
          y={i * 17 + 0.5}
          height="15"
          fill={b.green ? "url(#app)" : "url(#mpi)"}
          stroke={b.green ? "#147000" : "#c80000"}
        />
      ))}
      <g stroke="#000" strokeDasharray="1 2" opacity=".3" shapeRendering="crispEdges">
        {summaryTicks.slice(0, 9).map((t) => (
          <line key={t.label} x1={sx(t.x)} x2={sx(t.x)} y1="0" y2="102" />
        ))}
      </g>
      {summary.map((b, i) => (
        <text key={b.name} x={sx(b.outside ? b.x - 4 : b.x + 2)} y={i * 17 + 11} fontSize="12" fillOpacity=".9" textAnchor={b.outside ? "end" : "start"}>
          {b.value}
        </text>
      ))}
    </SummaryPlot>
  );
}

function OverviewChart() {
  const at = (x: number) => `${((x - 498) / 2061) * 100}%`;
  const halo = { stroke: "#ffb9b9", strokeWidth: 3, paintOrder: "stroke", fontSize: 12 } as const;
  return (
    <Overview>
      <svg width="100%" height="36">
        <path d="M4 33q3-6 6-9l2-8 4-5 2-6 3-2h12v30z" fill="#f00" />
        <rect x={at(520)} y="3" width={at(2553 - 22)} height="30" fill="#f00" />
        <rect x={at(2346)} y="3" width={`${(129 / 2061) * 100}%`} height="30" fill="#ff6060" />
        <svg x={at(2391)} y="3" overflow="visible">
          <path d="M0 0h21v3h-2v4h-2v3h-2v3h-2v3l-2 3-1 3-2-6-1-4-2-3-2-4H2V2H0z" fill="#70c45c" />
        </svg>
        <rect x={at(2344)} y="0" width="3" height="36" fill="#555" />
        <rect x={at(2474)} y="0" width="3" height="36" fill="#555" />
        <rect x={at(2553)} y="0" width="10" height="36" fill="#fff" />
        <text x={at(2341)} y="14" textAnchor="end" {...halo}>
          0.495 s
        </text>
        <text x={at(2409)} y="31" textAnchor="middle" {...halo}>
          34.08 ms
        </text>
        <text x={at(2479)} y="14" {...halo}>
          0.529 s
        </text>
      </svg>
    </Overview>
  );
}

/* ---------- page ---------- */

export default function App() {
  return (
    <Page>
      <Global />
      <TopPanel>
        <PanelButton $w={107}>
          <XubuntuIcon />
          Applications
        </PanelButton>
        <PanelButton $w={72}>
          <FolderIcon color="#bdbdbd" home />
          Places
        </PanelButton>
        <PanelButton $w={34} aria-label="Files">
          <FolderIcon color="#8fbbdc" />
        </PanelButton>
        <PanelButton $w={23} aria-label="Web browser">
          <GlobeIcon />
        </PanelButton>
        <PanelButton $w={24} aria-label="Mail">
          <MailIcon />
        </PanelButton>
        <PanelButton $w={25} aria-label="Terminal">
          <TerminalIcon />
        </PanelButton>
        <PanelButton $w={24} aria-label="Find">
          <SearchIcon />
        </PanelButton>
        <Spacer />
        <PanelButton $w={33} aria-label="Volume">
          <VolumeIcon />
        </PanelButton>
        <PanelButton $w={151}>Shyam Arumugaswamy</PanelButton>
        <WorkspaceButton aria-label="Workspace 1">
          <VampirIcon />
        </WorkspaceButton>
        <PanelButton $w={87}>17 Jan, 16:56</PanelButton>
        <PanelButton $w={42} aria-label="CPU load">
          <CpuGrid />
        </PanelButton>
        <PanelButton $w={21} aria-label="Vampir">
          <VampirIcon w={20} h={14} />
        </PanelButton>
      </TopPanel>

      <TitleBar>
        <TitleControls>
          <button aria-label="Window menu">
            <Arrow dir="down" color="#777" />
          </button>
        </TitleControls>
        <WindowTitle>Trace View - /home/hpc/h039y/h039y39/shyam/assign4/scorep-20190117_1649_5461519924976716/traces.otf2 * - Vampir</WindowTitle>
        <TitleControls $end>
          {["M2 6h8", "M2 6h8M6 2v8", "M2.500 2.500l7 7M9.500 2.500l-7 7"].map((d, i) => (
            <button key={d} aria-label={["Minimize", "Maximize", "Close"][i]}>
              <svg width="12" height="12" viewBox="0 0 12 12">
                <path d={d} stroke="#777" strokeWidth="2" />
              </svg>
            </button>
          ))}
        </TitleControls>
      </TitleBar>

      <MenuBar>
        <VampirIcon />
        <MenuItems>
          {["File", "Edit", "Chart", "Filter", "Window", "Help"].map((m) => (
            <MenuItem key={m}>
              <u>{m.charAt(0)}</u>
              {m.slice(1)}
            </MenuItem>
          ))}
        </MenuItems>
        <MdiGroup>
          {["M3 5.500h5", "M2.500 4.500h3.500v3.500h-3.500zM5 4V2.500h3.500V6H7", "M3 3l5 5M8 3l-5 5"].map((d, i) => (
            <MdiButton key={d} aria-label={["Minimize view", "Restore view", "Close view"][i]}>
              <svg width="11" height="11" viewBox="0 0 11 11">
                <rect x=".5" y=".5" width="10" height="10" rx="2" fill="none" stroke="#555" />
                <path d={d} stroke="#444" fill="none" strokeWidth={i === 1 ? 1 : 1.8} />
              </svg>
            </MdiButton>
          ))}
        </MdiGroup>
      </MenuBar>

      <Toolbar>
        <Handle $before={0} $after={2} />
        {toolIcons.map((t) => (
          <ToolButton key={t.name} aria-label={t.name}>
            <svg width="24" height="24" viewBox="0 0 24 24">
              {t.art}
            </svg>
          </ToolButton>
        ))}
        <ToolSeparator />
        <ToolButton $on aria-label="Function colors">
          <ColorIcon />
        </ToolButton>
        <ToolButton aria-label="Pin">
          <PinIcon />
        </ToolButton>
        <ToolButton $on aria-label="Hints">
          <BulbIcon />
        </ToolButton>
        <Handle $before={7} $after={1} />
        <OverviewChart />
      </Toolbar>

      <Workspace>
        <Column>
          <Heading title="Timeline">
            <HeadingButtons>
              <MiniButton aria-label="Detach timeline">
                <DetachGlyph />
              </MiniButton>
              <MiniButton aria-label="Close timeline">
                <CrossGlyph />
              </MiniButton>
            </HeadingButtons>
          </Heading>
          <Pane $height={15}>
            <Canvas>
              <PlotLayer>
                <GridLines top={12} />
                {ticks.map((t) => (
                  <text key={t.label} x={px(t.x)} y="11" fontSize="12" textAnchor="middle">
                    {t.label}
                  </text>
                ))}
              </PlotLayer>
            </Canvas>
            <SideStrip>
              <SideLine />
            </SideStrip>
          </Pane>
          <Splitter>
            <SplitterDots />
          </Splitter>
          <Pane $grow={612}>
            <Canvas>
              <LabelList $left={12} $top={8}>
                {threads.map((t) => (
                  <li key={t}>{t}</li>
                ))}
              </LabelList>
              <ProcessTimeline />
            </Canvas>
            <SideStrip>
              <SideStub />
              <SideButtons>
                <MiniButton aria-label="Close chart">
                  <CrossGlyph />
                </MiniButton>
                <MiniButton aria-label="Detach chart">
                  <DetachGlyph />
                </MiniButton>
              </SideButtons>
              <SideLine />
            </SideStrip>
          </Pane>
          <Splitter />
          <Pane $grow={619}>
            <Canvas>
              <PlotLayer>
                <GridLines />
              </PlotLayer>
              <MetricContent>
                <MetricTitle>Values of Metric "MPI Latencies" over Time in seconds</MetricTitle>
                <MetricRows>
                  <LabelList $left={2} $top={0}>
                    {threads.map((t) => (
                      <li key={t}>{t}</li>
                    ))}
                  </LabelList>
                  <MetricBars />
                </MetricRows>
                <ScaleBlock>
                  <ColorScale />
                </ScaleBlock>
              </MetricContent>
            </Canvas>
            <SideStrip>
              <SideLine />
            </SideStrip>
          </Pane>
          <HScroll>
            <ScrollButton $line="right" aria-label="Scroll left">
              <Arrow dir="left" />
            </ScrollButton>
            <Trough $grow={1375} />
            <Thumb $grow={26} />
            <Trough $grow={58} />
            <ScrollButton $line="left" aria-label="Scroll right">
              <Arrow dir="right" />
            </ScrollButton>
          </HScroll>
        </Column>

        <Column>
          <Heading title="Function Summary" />
          <SummaryPane>
            <SummaryTitle>All Processes, Accumulated Exclusive Time per Function</SummaryTitle>
            <SummaryChart />
            <SummaryNames>
              {summary.map((b) => (
                <li key={b.name}>{b.name}</li>
              ))}
            </SummaryNames>
          </SummaryPane>

          <Heading title="Context View" top={5} />
          <TabBar>
            <TabAction aria-label="Compare">
              <svg width="13" height="24" viewBox="0 0 13 24">
                <rect x=".5" y="6.500" width="12" height="4" fill="#5fd84f" stroke="#a8b8a4" />
                <rect x=".5" y="13.500" width="12" height="4" fill="#2fbf2a" stroke="#a8b8a4" />
              </svg>
            </TabAction>
            <Tab>
              Trace Info
              <button aria-label="Close tab">
                <svg width="13" height="13" viewBox="0 0 13 13">
                  <path d="M2 2q6 5 8 9M11 1Q5 5 1.500 12" stroke="#222" strokeWidth="2.200" fill="none" strokeLinecap="round" />
                </svg>
              </button>
            </Tab>
            <TabAction $end aria-label="Add tab">
              <svg width="15" height="24" viewBox="0 0 15 24">
                <path d="M7.500 4.500v15M0 12h15" stroke="#3fcb30" strokeWidth="3.400" />
              </svg>
            </TabAction>
          </TabBar>
          <TreeBox>
            <TreeView>
              <Table>
                <thead>
                  <tr>
                    <HeadCell $w={309} scope="col">
                      Property
                    </HeadCell>
                    <HeadCell scope="col">Value</HeadCell>
                  </tr>
                </thead>
                <tbody>
                  {properties.map(([name, value, child]) => (
                    <tr key={name}>
                      <Cell $pad={child ? 13 : 3}>{name}</Cell>
                      <Cell $pad={2}>{value}</Cell>
                    </tr>
                  ))}
                </tbody>
              </Table>
            </TreeView>
            <VScroll>
              <ScrollButton $line="bottom" aria-label="Scroll up">
                <Arrow dir="up" />
              </ScrollButton>
              <Thumb $vertical $grow={150} />
              <Trough $grow={268} />
              <ScrollButton $line="top" aria-label="Scroll down">
                <Arrow dir="down" />
              </ScrollButton>
            </VScroll>
          </TreeBox>

          <Heading title="Function Legend" top={6} />
          <LegendBox>
            <LegendItem>
              <Swatch $top="#d40000" $bottom="#ff7c7c" $edge="#c80000" />
              MPI
            </LegendItem>
            <LegendItem>
              <Swatch $top="#0000d4" $bottom="#7c7cff" $edge="#0000c8" />
              Monitor
            </LegendItem>
            <LegendItem>
              <Swatch $top="#178000" $bottom="#24e800" $edge="#147000" />
              Application
            </LegendItem>
          </LegendBox>
        </Column>
      </Workspace>

      <StatusBar>0.51695 s</StatusBar>

      <TaskBar>
        <DesktopButton aria-label="Start">
          <XubuntuIcon />
        </DesktopButton>
        <DesktopButton aria-label="Show desktop">
          <svg width="20" height="18" viewBox="0 0 20 18">
            <rect x="0" y="1" width="20" height="13" rx="1" fill="#57758c" />
            <rect x="2" y="3" width="16" height="8" fill="#a8cde8" />
            <path d="M3 17h14l-2-3H5z" fill="#3f4f5b" />
          </svg>
        </DesktopButton>
        <Tasks>
          <TaskButton>
            <svg width="16" height="18" viewBox="0 0 16 18">
              <rect x="0" y="1" width="12" height="16" fill="#f0f0f0" />
              <path d="M2 5h8M2 8h8M2 11h8M2 14h5" stroke="#bbb" />
            </svg>
            assignment4.pdf
          </TaskButton>
          <TaskButton>
            <svg width="16" height="16" viewBox="0 0 16 16">
              <circle cx="8" cy="8" r="7.500" fill="#b6592a" />
              <circle cx="9" cy="7" r="4.500" fill="#3a587c" />
              <path d="M1 4q2 7 8 7 4 0 5-3 1 6-6 7-7-1-7-11z" fill="#c87a35" />
            </svg>
            [POS/ws4/cannon_src at m...
          </TaskButton>
          <TaskButton>
            <svg width="16" height="18" viewBox="0 0 16 18">
              <path d="M3 8h10v9H3z" fill="#ece3d4" />
              <path d="M0 10l8-9 8 9-1.500 1L8 4l-6.500 7z" fill="#9a4a34" />
              <rect x="6.500" y="11" width="3" height="6" fill="#7a4a34" />
            </svg>
            home_at - File Manager
          </TaskButton>
          <TaskButton $active>
            <VampirIcon w={16} h={14} />
            Trace View - /home/hpc/h0...
          </TaskButton>
          <TaskButton>
            <TerminalIcon size={16} />
            Terminal - h039y39@login2...
          </TaskButton>
        </Tasks>
        <TaskSeparator />
        <svg width="15" height="20" viewBox="0 0 15 20">
          <path d="M1 3h13l-1 16H2z" fill="#b7bcc0" />
          <path d="M4 5v13M11 5v13" stroke="#e4e7e9" strokeWidth="1.500" />
          <ellipse cx="7.500" cy="3" rx="6.500" ry="2" fill="#dfe3e5" stroke="#888" strokeWidth=".6" />
          <rect x="5.500" y="6" width="4" height="5" fill="#4b9bd0" />
        </svg>
      </TaskBar>

      <Pointer width="10" height="16" viewBox="0 0 10 16">
        <path d="M.5.5v12l3-2.500 2 5 2-.8-2-4.700h4z" fill="#fff" stroke="#000" strokeWidth=".9" />
      </Pointer>
    </Page>
  );
}
